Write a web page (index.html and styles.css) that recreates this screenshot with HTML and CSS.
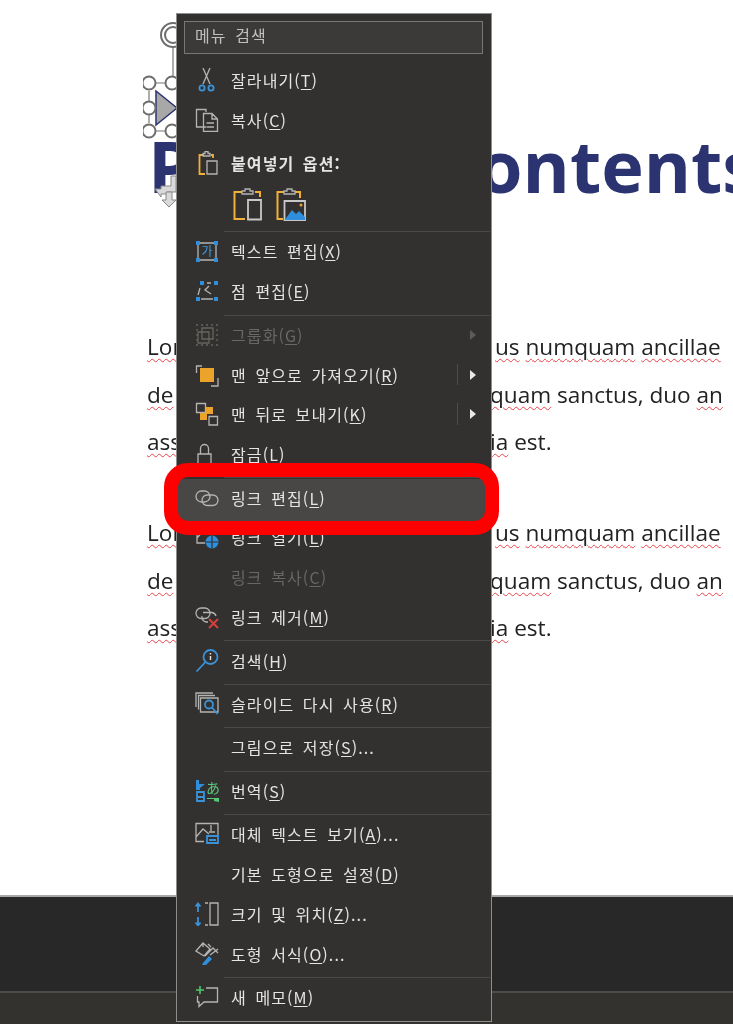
FILE: index.html
```html
<!DOCTYPE html>
<html lang="ko">
<head>
<meta charset="utf-8">
<title>링크 편집</title>
<link rel="stylesheet" href="styles.css">
</head>
<body>
<div class="app">
  <main class="slide">
    <h1 class="title"><span class="title-start">P</span><span class="title-end">ontents</span></h1>
    <section class="para">
      <div class="line"><span class="hidden-part"><span class="typo">Lorem</span> ipsum</span><span class="shown-part"><span class="typo">us</span> <span class="typo">numquam</span> <span class="typo">ancillae</span></span></div>
      <div class="line"><span class="hidden-part"><span class="typo">de</span> lenit</span><span class="shown-part q"><span class="typo">quam</span> sanctus, duo <span class="typo">an</span></span></div>
      <div class="line"><span class="hidden-part"><span class="typo">assum</span> ad</span><span class="shown-part q"><span class="typo">ia</span> est.</span></div>
    </section>
    <section class="para second">
      <div class="line"><span class="hidden-part"><span class="typo">Lorem</span> ipsum</span><span class="shown-part"><span class="typo">us</span> <span class="typo">numquam</span> <span class="typo">ancillae</span></span></div>
      <div class="line"><span class="hidden-part"><span class="typo">de</span> lenit</span><span class="shown-part q"><span class="typo">quam</span> sanctus, duo <span class="typo">an</span></span></div>
      <div class="line"><span class="hidden-part"><span class="typo">assum</span> ad</span><span class="shown-part q"><span class="typo">ia</span> est.</span></div>
    </section>
  </main>
  <div class="notes"></div>
  <div class="status"></div>

  <svg class="handles" viewBox="0 0 60 200" width="60" height="200">
    <path class="h-line" d="M30 30V67M12 67H29M12 115H29M6 75V107"/>
    <circle class="h-ring" cx="30" cy="19" r="12"/><circle class="h-ring" cx="30" cy="19" r="8"/>
    <path class="h-tri" d="M13 75V109L34 92Z"/>
    <circle class="h-ring" cx="6" cy="67" r="6.5"/><circle class="h-ring" cx="29" cy="67" r="6.5"/>
    <circle class="h-ring" cx="6" cy="92" r="6.5"/>
    <circle class="h-ring" cx="6" cy="115" r="6.5"/><circle class="h-ring" cx="29" cy="115" r="6.5"/>
    <path class="h-arrow" d="M12 173H18V170H28V160H33V170H33V176H24V178H18V181Z"/>
    <path class="h-arrow" d="M23 176H29V184H33L26 191L19 184H23Z"/>
  </svg>

  <nav class="menu">
    <div class="search">메뉴 검색</div>

    <div class="row"><svg class="ico" viewBox="0 0 24 24"><path class="g" d="M8 0L15 16M15 0L8 16"/><circle class="b" cx="7" cy="20" r="2.6"/><circle class="b" cx="16" cy="20" r="2.6"/></svg><span class="lbl">잘라내기(<u>T</u>)</span></div>
    <div class="row"><svg class="ico" viewBox="0 0 24 24"><path class="g" d="M11 19H1.500V1.500H11V4"/><path class="g" d="M8.500 5.500H17L22.500 11V23.500H8.500ZM17 5.500V11H22.500M11.500 15H19M11.500 19H19"/></svg><span class="lbl">복사(<u>C</u>)</span></div>
    <div class="row paste-head"><svg class="ico" viewBox="0 0 24 24"><path class="o" d="M9 4H4.500V23H10M16 4H18V7"/><path class="g" d="M8 5V2.500H10V.5H13V2.500H15V5Z"/><path class="g" d="M12 10H22V23H12Z"/></svg><span class="lbl strong">붙여넣기 옵션:</span></div>
    <div class="paste-row">
      <svg class="paste-ico" viewBox="0 0 30 33"><path class="o2" d="M9 4H1.500V31H12M22 4H27V9"/><path class="g" d="M9 6V3H12V1H17V3H20V6Z"/><path class="g2" d="M15 12H28V31.500H15Z"/></svg>
      <svg class="paste-ico" viewBox="0 0 30 33"><path class="o2" d="M8 4H1.500V31H7M19 4H24V10"/><path class="g" d="M8 6V3H11V1H16V3H19V6Z"/><path class="g2" d="M8.500 13H29V32H8.500Z"/><path class="fb" d="M9 31.500L16 22L20 26L23 23L29 29V32H9Z"/><circle class="fo" cx="25" cy="17" r="1.500"/></svg>
    </div>
    <div class="sep"></div>

    <div class="row"><svg class="ico" viewBox="0 0 24 24"><path class="g" d="M3 4H21V21H3Z"/><path class="fb" d="M1 2H5V6H1ZM19 2H23V6H19ZM1 19H5V23H1ZM19 19H23V23H19Z"/><text class="ga" x="12" y="17">가</text></svg><span class="lbl">텍스트 편집(<u>X</u>)</span></div>
    <div class="row"><svg class="ico" viewBox="0 0 24 24"><path class="fb" d="M5 2H9V6H5ZM19 2H23V6H19ZM1 18H5V22H1ZM19 18H23V22H19Z"/><path class="g" d="M3 16L5 9M12 4H16M6 20H18M14 7L10 11L16 15"/></svg><span class="lbl">점 편집(<u>E</u>)</span></div>
    <div class="sep"></div>

    <div class="row dis"><svg class="ico" viewBox="0 0 24 24"><path class="d" d="M7 5H18V16H7ZM3 9H14V20H3Z"/><path class="dd" d="M1 2H3M21 2H23M1 22H3M21 22H23M2 6V18M22 6V18M6 2H18M6 22H18"/></svg><span class="lbl">그룹화(<u>G</u>)</span><span class="arrow off"></span></div>
    <div class="row"><svg class="ico" viewBox="0 0 24 24"><path class="g" d="M7 3H1.500V10M23 15V23H16"/><path class="fo" d="M5 5H19V19H5Z"/></svg><span class="lbl">맨 앞으로 가져오기(<u>R</u>)</span><span class="vbar"></span><span class="arrow"></span></div>
    <div class="row"><svg class="ico" viewBox="0 0 24 24"><path class="g" d="M1.500 1.500H10.500V10.500H1.500ZM14 14.500H22.500V23H14Z"/><path class="fo" d="M5 11H11V5H18V12H12V18H5Z"/></svg><span class="lbl">맨 뒤로 보내기(<u>K</u>)</span><span class="vbar"></span><span class="arrow"></span></div>
    <div class="row"><svg class="ico" viewBox="0 0 24 24"><path class="g" d="M3 12H16V24H3ZM5.500 12V6.500A4 4 0 0 1 13.500 6.500V12"/></svg><span class="lbl">잠금(<u>L</u>)</span></div>
    <div class="sep"></div>

    <div class="row hot"><svg class="ico" viewBox="0 0 24 24"><rect class="g" x="1" y="5" width="14" height="11" rx="5.500"/><rect class="g" x="7" y="9" width="16" height="10.500" rx="5.200"/></svg><span class="lbl">링크 편집(<u>L</u>)</span></div>
    <div class="row"><svg class="ico" viewBox="0 0 24 24"><path class="g" d="M10 4L2 13M2 8V18H10"/><circle class="fb" cx="17" cy="17" r="6.500"/><path class="w" d="M10.500 17H23.500M17 10.500V23.500"/></svg><span class="lbl">링크 열기(<u>L</u>)</span></div>
    <div class="row dis"><span class="ico"></span><span class="lbl">링크 복사(<u>C</u>)</span></div>
    <div class="row"><svg class="ico" viewBox="0 0 24 24"><rect class="g" x="1" y="3" width="14" height="10.500" rx="5.200"/><path class="g" d="M8 7.500H17A5 5 0 0 1 21 11M13 17H11A5 5 0 0 1 7 11"/><path class="r" d="M14 14L23 23M23 14L14 23"/></svg><span class="lbl">링크 제거(<u>M</u>)</span></div>
    <div class="sep"></div>

    <div class="row"><svg class="ico" viewBox="0 0 24 24"><circle class="b" cx="15.500" cy="8" r="7"/><path class="b" d="M10.500 13L1.500 22.500"/><path class="wt" d="M15.500 7V11M15.500 4V5.500"/></svg><span class="lbl">검색(<u>H</u>)</span></div>
    <div class="sep"></div>

    <div class="row"><svg class="ico" viewBox="0 0 24 24"><path class="g" d="M18 1H1V15M20 3.500H3.500V17.500M5.500 6H23V20H5.500Z"/><circle class="b" cx="14" cy="12.500" r="4"/><path class="b" d="M17 15.500L22.500 22"/></svg><span class="lbl">슬라이드 다시 사용(<u>R</u>)</span></div>
    <div class="sep"></div>

    <div class="row"><span class="ico"></span><span class="lbl">그림으로 저장(<u>S</u>)...</span></div>
    <div class="sep"></div>

    <div class="row"><svg class="ico" viewBox="0 0 24 24"><path class="fb" d="M1 1H4V5H10L5 9V11H1Z"/><path class="b" d="M2 13H9V22H2ZM2 18H9"/><path class="fgr" d="M12 19H24V23L19 22L19 20H12Z"/><text class="jp" x="18" y="14">あ</text></svg><span class="lbl">번역(<u>S</u>)</span></div>
    <div class="sep"></div>

    <div class="row"><svg class="ico" viewBox="0 0 24 24"><path class="g" d="M9 19.500H1V1.500H23V13M1 15L8 7L14 12M16 3V9M14 10H20"/><path class="b" d="M12 14H23V21H12ZM14 18H21"/></svg><span class="lbl">대체 텍스트 보기(<u>A</u>)...</span></div>
    <div class="row"><span class="ico"></span><span class="lbl">기본 도형으로 설정(<u>D</u>)</span></div>
    <div class="row"><svg class="ico" viewBox="0 0 24 24"><path class="b" d="M3 2V10M3 15V23M.5 4.500L3 1.500L5.500 4.500M.5 20.500L3 23.500L5.500 20.500"/><path class="g" d="M15 1H23V23H15ZM10 1H13M10 23H13"/></svg><span class="lbl">크기 및 위치(<u>Z</u>)...</span></div>
    <div class="row"><svg class="ico" viewBox="0 0 24 24"><path class="g" d="M1 9L8 1L15 7L9 14ZM8 1V5M13 2L16 5M10 14L18 6L23 11"/><path class="fb" d="M8 21L14 14L17 17L11 23H7Z"/><path class="g" d="M15 13L23 7"/></svg><span class="lbl">도형 서식(<u>O</u>)...</span></div>
    <div class="sep"></div>

    <div class="row"><svg class="ico" viewBox="0 0 24 24"><path class="grn" d="M5 1V9M1 5H9"/><path class="g" d="M11 3H22.500V17H9L4 21.500V17H2.500V11"/></svg><span class="lbl">새 메모(<u>M</u>)</span></div>
  </nav>

  <div class="callout"></div>
</div>
</body>
</html>
```

FILE: styles.css
```css
* { box-sizing: border-box; }
html, body { margin: 0; padding: 0; background: #fff; }
.app {
  position: relative;
  width: 733px;
  height: 1024px;
  overflow: hidden;
  display: flex;
  flex-direction: column;
  filter: blur(0.35px);
}

/* slide */
.slide {
  height: 897px;
  flex: none;
  background: #fff;
  border-bottom: 2px solid #a9a9a9;
  padding: 116px 0 0 147px;
  overflow: hidden;
  font-family: "Open Sans", sans-serif;
  color: #222;
}
.title {
  margin: 0 0 109px;
  height: 98px;
  display: flex;
  font-size: 72px;
  line-height: 98px;
  font-weight: 700;
  color: #2b3470;
  white-space: nowrap;
}
.title-start { width: 331px; padding-left: 1px; flex: none; }
.para { display: flex; flex-direction: column; }
.para.second { margin-top: 43.5px; }
.line { display: flex; height: 47.500px; line-height: 47.500px; font-size: 22.6px; white-space: nowrap; }
.hidden-part { width: 347px; flex: none; overflow: hidden; }
.shown-part { margin-left: 1px; }
.shown-part.q { margin-left: -4px; }
.typo { text-decoration: underline wavy #e8434a 1px; text-underline-offset: 3px; }

/* bottom */
.notes { height: 96px; flex: none; background: #282828; border-bottom: 2px solid #4d4c4b; }
.status { flex: 1; background: #33322f; }

/* selection handles */
.handles { position: absolute; left: 143px; top: 16px; }
.h-line { fill: none; stroke: #777; stroke-width: 1.2; }
.h-ring { fill: #fff; stroke: #6d6d6d; stroke-width: 2; }
.h-tri { fill: #a8a8a8; stroke: #2b3470; stroke-width: 1.500; }
.h-arrow { fill: #d9d9dc; stroke: #888; stroke-width: 1; }

/* menu */
.menu {
  position: absolute;
  left: 176px;
  top: 13px;
  width: 316px;
  height: 1009px;
  background: #32312f;
  border: 1px solid #8e8e8e;
  padding-top: 7px;
  display: flex;
  flex-direction: column;
  font-family: "Noto Sans CJK KR", sans-serif;
  color: #e4e4e4;
  font-size: 16px;
}
.search {
  margin: 0 8px 8px 7px;
  height: 33px;
  flex: none;
  border: 1px solid #777775;
  background: #3b3a38;
  padding-left: 10px;
  line-height: 27px;
  color: #c0c0c0;
  letter-spacing: 1.100px;
  word-spacing: 3px;
}
.row {
  height: 39.8px;
  flex: none;
  display: flex;
  align-items: center;
  padding-left: 18px;
  padding-bottom: 4px;
  position: relative;
}
.ico { width: 24px; height: 24px; flex: none; margin-right: 12px; display: block; }
.lbl { letter-spacing: 1.100px; word-spacing: 3px; line-height: 20px; }
.lbl u { text-underline-offset: 2px; text-decoration-thickness: 1px; }
.strong { font-weight: 700; }
.paste-head { margin-top: 3.5px; }
.paste-row { height: 45px; flex: none; display: flex; align-items: flex-start; gap: 13px; padding: 3px 0 0 56px; }
.paste-ico { width: 30px; height: 33px; display: block; }
.sep { height: 1px; flex: none; margin: 1.350px 1px 1.350px 47px; background: #4a4947; }
.row.dis { color: #686765; }
.row.hot { background: #484745; box-shadow: 0 -1px 0 #484745, 0 3px 0 #484745; }
.arrow {
  position: absolute;
  left: 293px;
  top: calc(50% - 2px);
  margin-top: -5px;
  border-left: 6px solid #e8e8e8;
  border-top: 5px solid transparent;
  border-bottom: 5px solid transparent;
}
.arrow.off { border-left-color: #5d5c5a; }
.vbar { position: absolute; left: 280px; top: 7px; bottom: 11px; width: 1px; background: #4e4d4b; }

/* icon strokes */
.ico path, .ico circle, .ico rect, .paste-ico path, .paste-ico circle { fill: none; stroke-width: 1.300; }
.ico .g, .paste-ico .g { stroke: #b4b4b4; }
.paste-ico .g2 { stroke: #c8c8c8; stroke-width: 1.800; }
.ico .b { stroke: #3a92d8; stroke-width: 1.800; }
.ico .o { stroke: #f0b03a; stroke-width: 1.800; }
.paste-ico .o2 { stroke: #f0b03a; stroke-width: 2; }
.ico .d { stroke: #66655f; }
.ico .dd { stroke: #66655f; stroke-dasharray: 2 3; }
.ico .w { stroke: #33322f; stroke-width: 1.200; }
.ico .wt { stroke: #e4e4e4; stroke-width: 1.400; }
.ico .r { stroke: #d8403c; stroke-width: 2; }
.ico .grn { stroke: #4fc76a; stroke-width: 1.600; }
.ico .fb, .paste-ico .fb { fill: #2f8fdc; stroke: none; }
.ico .fo, .paste-ico .fo { fill: #eca32b; stroke: none; }
.ico .fgr { fill: #55c878; stroke: none; }
.ico .ga { font-size: 12px; fill: #3f9ae0; text-anchor: middle; font-family: "Noto Sans CJK KR", sans-serif; }
.ico .jp { font-size: 14px; fill: #5ac77e; text-anchor: middle; font-family: "Noto Sans CJK JP", sans-serif; }

/* red callout */
.callout {
  position: absolute;
  left: 164px;
  top: 463px;
  width: 335px;
  height: 72px;
  border: 14px solid #fe0000;
  border-radius: 24px;
}
```
